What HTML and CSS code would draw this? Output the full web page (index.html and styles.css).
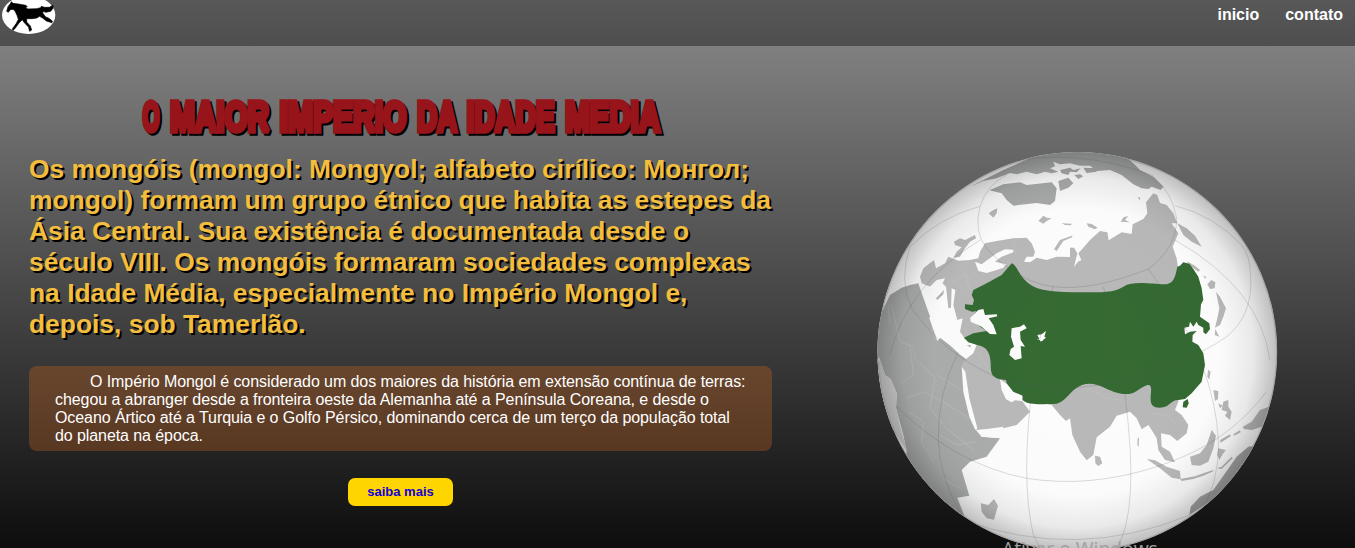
FILE: index.html
```html
<!DOCTYPE html>
<html lang="pt-BR">
<head>
<meta charset="utf-8">
<title>Império Mongol</title>
<link rel="stylesheet" href="styles.css">
</head>
<body>
<header class="topbar">
  <svg class="logo" viewBox="0 0 180 138">
    <ellipse cx="86" cy="45" rx="80" ry="57" fill="#fff"/>
    <path stroke="#000" stroke-width="2" stroke-linejoin="round" d="M34 5L39 10 55 12 77 16 82 20 76 23 84 27 110 26 122 23 124 19 133 22 148 22 159 16 159 25 152 34 137 37 130 34 128 39 137 51 145 54 157 63 156 68 139 63 129 55 119 49 110 54 96 56 80 56 80 66 91 78 95 90 89 94 87 88 86 82 72 67 67 59 57 69 43 88 39 91 37 87 49 70 55 58 51 46 45 33 39 28 31 29 25 37 20 34 24 20 31 11Z"/>
  </svg>
  <nav class="menu"><a>inicio</a><a>contato</a></nav>
</header>
<main class="hero">
  <section class="copy">
    <h1 class="title">
      <svg class="title-art" viewBox="130 85 550 60" role="img">
        <defs>
          <g id="words">
            <text x="142.5" y="130.5" textLength="17" lengthAdjust="spacingAndGlyphs">O</text>
            <text x="170" y="130.5" textLength="99" lengthAdjust="spacingAndGlyphs">MAIOR</text>
            <text x="279.5" y="130.5" textLength="127" lengthAdjust="spacingAndGlyphs">IMPERIO</text>
            <text x="417" y="130.5" textLength="40" lengthAdjust="spacingAndGlyphs">DA</text>
            <text x="466.5" y="130.5" textLength="88" lengthAdjust="spacingAndGlyphs">IDADE</text>
            <text x="565" y="130.5" textLength="95" lengthAdjust="spacingAndGlyphs">MEDIA</text>
          </g>
        </defs>
        <use href="#words" x="2" y="2" class="title-shadow"/>
        <use href="#words" class="title-face"/>
      </svg>
    </h1>
    <h2 class="lead">Os mongóis (mongol: Mongγol; alfabeto cirílico: Монгол;<br>mongol) formam um grupo étnico que habita as estepes da<br>Ásia Central. Sua existência é documentada desde o<br>século VIII. Os mongóis formaram sociedades complexas<br>na Idade Média, especialmente no Império Mongol e,<br>depois, sob Tamerlão.</h2>
    <p class="note">O Império Mongol é considerado um dos maiores da história em extensão contínua de terras:<br>chegou a abranger desde a fronteira oeste da Alemanha até a Península Coreana, e desde o<br>Oceano Ártico até a Turquia e o Golfo Pérsico, dominando cerca de um terço da população total<br>do planeta na época.</p>
    <a class="more">saiba mais</a>
  </section>
  <svg class="globe" viewBox="0 0 1230 1209">
    <defs>
      <clipPath id="disc"><circle cx="622" cy="621" r="600"/></clipPath>
      <radialGradient id="shade" gradientUnits="userSpaceOnUse" cx="622" cy="621" r="600">
        <stop offset="0" stop-color="#000" stop-opacity="0"/>
        <stop offset=".72" stop-color="#000" stop-opacity=".01"/>
        <stop offset=".88" stop-color="#000" stop-opacity=".08"/>
        <stop offset="1" stop-color="#000" stop-opacity=".25"/>
      </radialGradient>
    </defs>
    <g clip-path="url(#disc)">
      <circle cx="622" cy="621" r="600" fill="#fdfdfd"/>
      <g fill="#b9b9b9">
        <!-- Eurasia -->
        <path d="M330 320L345 295 380 288 430 280 470 278 485 295 495 320 490 335 470 335 462 350 480 352 500 338 530 345 560 335 600 336 600 308 612 308 622 325 612 365 624 350 634 345 625 325 640 308 660 285 690 258 712 262 716 286 755 262 785 267 788 238 820 222 832 205 828 172 850 145 862 150 870 174 890 180 910 205 922 235 905 235 925 265 908 305 920 340 924 368 950 500 925 770 915 795 935 810 955 840 950 865 922 888 900 870 873 865 875 905 900 920 915 952 885 945 865 915 860 880 845 855 835 840 815 853 800 820 780 800 740 812 720 845 680 877 670 930 650 946 630 920 607 870 600 820 588 828 570 810 545 780 455 765 480 800 440 840 400 850 320 855 270 660 285 635 225 560 190 470 225 400 200 405 180 425 155 415 150 395 160 370 192 345 198 370 225 355 235 335 265 347 300 345 325 340Z"/>
        <!-- Africa -->
        <path fill="#aaadac" d="M145 415L120 420 95 428 60 450 36 500 10 600 28 640 45 690 62 702 80 745 78 790 100 870 110 920 100 990 290 1130 262 1058 298 1052 275 975 300 950 350 935 390 880 335 875 318 855 298 770 275 660 290 640 200 570 175 500 150 430Z"/>
        <path d="M252 290L270 280 285 285 315 270 318 280 300 290 285 310 270 335 250 338 260 320 275 307 255 300ZM356 205L370 195 382 190 380 205 370 218ZM505 228L520 212 530 218 545 220 530 228 520 236ZM575 235L605 236 603 241 585 240ZM552 313L570 285 605 272 608 276 580 288 560 318ZM650 235L665 237 683 248 675 253 655 245ZM752 230L760 217 775 213 765 225 780 232ZM803 157L811 158 809 166Z"/>
        <!-- Greenland and North America -->
        <path fill="#a9acab" d="M358 136L400 118 450 112 470 120 545 112 560 130 555 168 540 180 500 174 430 182 410 165 395 145ZM565 108L595 98 610 115 595 128 570 138ZM300 125L400 75 500 30 625 10 750 20 790 55 810 75 850 95 880 125 872 135 845 125 835 132 815 130 790 118 755 90 720 75 680 78 660 62 630 62 600 55 570 58 550 50 555 64 540 70 565 80 545 85 525 80 500 88 470 80 440 88 420 84 380 100 340 108ZM570 75L600 68 610 75 632 70 620 82 600 80 595 90 575 85ZM613 90L630 88 640 94 625 102ZM640 68L678 70 680 80 650 84Z"/>
        <!-- Pacific and Indian Ocean islands -->
        <path d="M922 235L950 250 975 272 995 305 965 290 940 270ZM950 348L975 362 990 375 985 380 960 362ZM1000 390L1010 398 1004 400ZM1012 418L1024 405 1036 412 1034 430 1020 432ZM1038 440L1050 455 1068 490 1060 515 1050 540 1035 548 1042 520 1048 490ZM1036 552L1048 575 1034 570ZM1014 674L1022 680 1018 704 1012 695ZM1030 735L1045 738 1044 762 1035 768ZM1045 775L1058 782 1050 790ZM1060 770L1075 765 1075 785 1085 800 1080 825 1065 812 1072 800 1055 795ZM960 935L990 925 1010 900 1025 855 1038 872 1030 910 1015 950 990 962 965 960ZM830 942L855 946 890 965 930 978 932 1003 905 998 870 970ZM930 1002L975 994 1000 985 1030 975 1030 979 1000 992 970 1002 935 1008ZM1040 970L1055 965 1085 935 1088 940 1055 972ZM1045 910L1068 915 1060 925 1048 945 1042 930ZM1050 885L1080 868 1082 874 1052 893ZM1090 868L1110 856 1112 862 1092 872ZM1118 845L1145 830 1170 795 1198 785 1175 845 1145 855 1122 852ZM675 932L690 935 697 955 685 963 676 955ZM332 1075L355 1080 372 1062 384 1082 372 1124 350 1120 335 1100ZM803 880L807 878 806 905 802 900Z"/>
        <path fill="#a6a6a6" d="M958 1110L962 1085 990 1055 1030 1035 1055 1000 1100 935 1135 905 1170 900 1110 1010Z"/>
      </g>
      <g fill="none" stroke="#c9cbca" stroke-width="2" opacity=".6">
        <path d="M65 480L90 590 130 605 135 640 195 700 180 790 230 850 310 915M195 515L185 560 200 585M110 760L160 740 220 770 250 790 300 820M210 870L260 900 320 890M245 410L285 390 300 430 275 450M265 360L300 405M220 1000L270 1030M115 800L160 830 155 890 190 950M670 738L710 760 760 765 790 790M845 805L890 810 920 840M200 690L275 735M55 480L60 540M85 720L130 690 120 600M320 620L370 690M430 290L440 340"/>
      </g>
      <!-- inland seas and the open Atlantic -->
      <path fill="#d4d4d4" d="M20 640L32 650 45 690 62 702 80 745 78 790 92 850 112 920 60 840 30 740Z"/>
      <g fill="#fcfcfc">
        <path d="M145 415L180 425 207 405 228 425 235 490 243 488 245 430 256 435 250 480 262 525 278 520 270 560 285 582 320 600 310 625 288 642 265 625 240 600 215 575 202 588 178 520 192 490 160 440ZM275 665L286 680 298 760 322 850 316 855 298 815 280 740ZM322 856L400 845 400 880 335 875ZM390 703L412 718 430 740 457 750 457 768 435 766 425 772 408 763 395 735ZM315 350L335 358 352 345 380 325 405 313 430 314 430 322 395 335 375 350 408 358 400 368 380 375 350 384 325 378Z"/>
      </g>
      <path fill="#b3b3b3" d="M198 460L222 435 220 448 202 465ZM290 600L302 600 302 608Z"/>
      <!-- Mongol Empire -->
      <path fill="#356a33" d="M425 355C442 362 445 390 475 415S560 442 630 442C700 441 730 444 760 425S850 418 880 418 915 400 922 365L930 362 940 352 958 356 970 372 985 395 995 430 1000 465 993 478 990 515 1003 524 1018 535 1020 552 1008 568 1000 562 1000 548 985 540 980 530 970 545 960 530 957 545 942 548 945 568 960 560 980 558 968 570 967 590 985 600 1000 625 1005 660 995 710 965 745 945 762 925 765C900 765 900 788 870 788S840 770 843 740 830 718 800 738 730 742 700 727 640 712 615 732 580 777 550 777 475 782 458 765L458 752 430 740 410 715 408 705 390 703C360 695 363 680 362 655S355 605 322 600L295 592 282 578 310 565 350 558 300 524 320 498 306 500 285 492 285 478 308 480 312 465 305 450 310 435 350 415 395 390Z"/>
      <path fill="#356a33" d="M940 770L953 762 956 775 950 788 938 787Z"/>
      <path fill="#fcfcfc" d="M300 520L325 495 340 492 345 510 380 508 382 514 356 520 370 540 380 568 360 567 335 545 302 530ZM425 550L450 545 462 538 470 550 450 560 452 585 465 605 452 603 455 640 435 645 418 630 422 612 432 605 423 575ZM502 570L515 568 528 558 523 575 528 578 512 590ZM500 583L520 582 518 588Z"/>
      <circle cx="622" cy="621" r="600" fill="url(#shade)"/>
      <g fill="none" stroke="#555" stroke-width="2.5" opacity=".25">
        <path d="M120 305Q210 215 330 184Q350 120 410 90M330 184Q310 260 350 310Q440 410 550 425T835 372Q920 310 920 220Q905 140 850 95M330 285Q110 420 60 630M120 305Q85 410 125 490Q225 630 380 697Q620 770 880 670Q1000 625 1070 575Q1150 510 1142 390Q1140 330 1115 300Q1030 210 915 182M915 285Q1170 430 1200 645M265 620Q200 750 205 890Q210 1000 270 1100M80 785Q260 960 470 1000Q660 1030 860 965Q1070 900 1190 740M550 425Q520 500 490 700Q450 1000 490 1170L510 1209M700 425Q740 550 765 750Q810 1100 740 1209M835 372Q1010 610 1040 830Q1060 960 1010 1070M280 1125Q620 1250 960 1110M390 55Q620 5 850 92"/>
      </g>
      <circle cx="622" cy="621" r="598" fill="none" stroke="#888" stroke-width="4" opacity=".5"/>
    </g>
  </svg>
</main>
<div class="watermark">Ativar o Windows</div>
</body>
</html>
```

FILE: styles.css
```css
* { box-sizing: border-box; }
body {
  margin: 0;
  height: 548px;
  overflow: hidden;
  font-family: "Liberation Sans", Arial, sans-serif;
  background: linear-gradient(#8a8a8a, #0d0d0d);
}
.topbar {
  display: flex;
  justify-content: space-between;
  height: 46px;
  background: linear-gradient(#585858, #4e4e4e);
}
.logo { width: 60px; height: 46px; }
.menu {
  display: flex;
  gap: 26px;
  padding: 6px 12px 0 0;
  color: #fff;
  font-size: 16px;
  font-weight: bold;
}
.hero {
  display: flex;
  justify-content: space-between;
  height: 502px;
  padding: 0 75px 0 29px;
}
.copy {
  display: flex;
  flex-direction: column;
  align-items: center;
  width: 743px;
  padding-top: 39px;
}
.title { margin: 0; height: 60px; padding-left: 9px; }
.title-art {
  display: block;
  width: 550px;
  height: 60px;
  font: bold 42px "Liberation Sans", Arial, sans-serif;
  stroke-width: 5.5px;
  stroke-linejoin: miter;
  stroke-miterlimit: 2;
}
.title-shadow { fill: #000; stroke: #000; }
.title-face { fill: #96141a; stroke: #96141a; }
.lead {
  align-self: flex-start;
  margin: 9px 0 0;
  color: #f3bd3e;
  font-size: 26.4px;
  line-height: 31px;
  white-space: nowrap;
  text-shadow: 2px 2px #000;
}
.note {
  align-self: stretch;
  height: 85px;
  margin: 26px 0 0;
  padding: 7px 26px 0;
  border-radius: 8px;
  background: linear-gradient(#68462e, #593822);
  color: #fff;
  font-size: 16px;
  line-height: 18px;
  letter-spacing: -.08px;
  text-indent: 35px;
  white-space: nowrap;
}
.more {
  width: 105px;
  height: 28px;
  margin-top: 27px;
  border-radius: 7px;
  background: #ffd500;
  color: #1200d8;
  font-size: 13px;
  font-weight: bold;
  line-height: 27px;
  text-align: center;
}
.globe {
  width: 410px;
  height: 403px;
  flex: none;
  margin-top: 99px;
}
.watermark {
  position: absolute;
  left: 1002px;
  top: 535px;
  color: #a0a0a0;
  font: 19.3px/28px "Open Sans", sans-serif;
  white-space: nowrap;
}
```
